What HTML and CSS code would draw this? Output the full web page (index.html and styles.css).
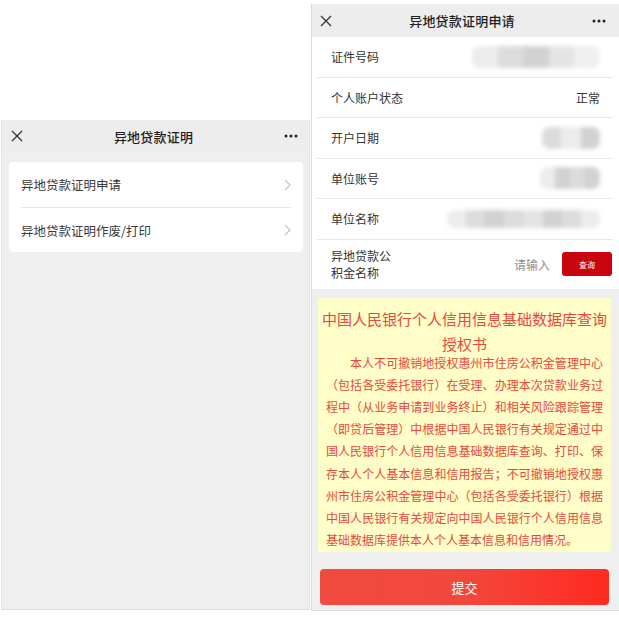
FILE: index.html
```html
<!DOCTYPE html>
<html lang="zh-CN">
<head>
<meta charset="utf-8">
<title>异地贷款证明</title>
<link rel="stylesheet" href="styles.css">
</head>
<body>
<div class="stage">
  <section class="phone phone-left">
    <header class="nav">
      <svg class="nav-close" width="12" height="12" viewBox="0 0 12 12"><path d="M1 1L11 11M11 1L1 11" stroke="#333" stroke-width="1.3" fill="none"/></svg>
      <div class="nav-title">异地贷款证明</div>
      <svg class="nav-more" width="14" height="4" viewBox="0 0 14 4"><circle cx="2" cy="2" r="1.5" fill="#222"/><circle cx="7" cy="2" r="1.5" fill="#222"/><circle cx="12" cy="2" r="1.5" fill="#222"/></svg>
    </header>
    <div class="menu-card">
      <div class="menu-row">
        <span>异地贷款证明申请</span>
        <svg class="chev" width="7" height="12" viewBox="0 0 7 12"><path d="M1 1L6 6L1 11" stroke="#c4c4c4" stroke-width="1.2" fill="none"/></svg>
      </div>
      <div class="menu-row">
        <span>异地贷款证明作废/打印</span>
        <svg class="chev" width="7" height="12" viewBox="0 0 7 12"><path d="M1 1L6 6L1 11" stroke="#c4c4c4" stroke-width="1.2" fill="none"/></svg>
      </div>
    </div>
  </section>

  <section class="phone phone-right">
    <header class="nav nav-right">
      <svg class="nav-close" width="12" height="12" viewBox="0 0 12 12"><path d="M1 1L11 11M11 1L1 11" stroke="#333" stroke-width="1.3" fill="none"/></svg>
      <div class="nav-title">异地贷款证明申请</div>
      <svg class="nav-more" width="14" height="4" viewBox="0 0 14 4"><circle cx="2" cy="2" r="1.5" fill="#222"/><circle cx="7" cy="2" r="1.5" fill="#222"/><circle cx="12" cy="2" r="1.5" fill="#222"/></svg>
    </header>
    <div class="form">
      <div class="form-row">
        <span class="label">证件号码</span>
        <div class="blur blur-id"><i class="b1"></i><i class="b2"></i><i class="b3"></i><i class="b4"></i><i class="b5"></i></div>
      </div>
      <div class="form-row">
        <span class="label">个人账户状态</span>
        <span class="value">正常</span>
      </div>
      <div class="form-row">
        <span class="label">开户日期</span>
        <div class="blur blur-date"><i class="b2"></i><i class="b1"></i><i class="b3"></i></div>
      </div>
      <div class="form-row">
        <span class="label">单位账号</span>
        <div class="blur blur-acct"><i class="b1"></i><i class="b3"></i><i class="b2"></i><i class="b3"></i></div>
      </div>
      <div class="form-row">
        <span class="label">单位名称</span>
        <div class="blur blur-name"><i class="b1"></i><i class="b2"></i><i class="b3"></i><i class="b2"></i><i class="b4"></i><i class="b3"></i><i class="b2"></i><i class="b1"></i></div>
      </div>
      <div class="form-row form-row-last">
        <span class="label label-wrap">异地贷款公<br>积金名称</span>
        <span class="placeholder">请输入</span>
        <button class="query-btn">查询</button>
      </div>
    </div>
    <div class="notice">
      <h2 class="notice-title">中国人民银行个人信用信息基础数据库查询授权书</h2>
      <p class="notice-body">本人不可撤销地授权惠州市住房公积金管理中心（包括各受委托银行）在受理、办理本次贷款业务过程中（从业务申请到业务终止）和相关风险跟踪管理（即贷后管理）中根据中国人民银行有关规定通过中国人民银行个人信用信息基础数据库查询、打印、保存本人个人基本信息和信用报告；不可撤销地授权惠州市住房公积金管理中心（包括各受委托银行）根据中国人民银行有关规定向中国人民银行个人信用信息基础数据库提供本人个人基本信息和信用情况。</p>
    </div>
    <button class="submit-btn">提交</button>
  </section>
</div>
</body>
</html>
```

FILE: styles.css
```css
* { box-sizing: border-box; }
html, body {
  margin: 0;
  padding: 0;
  background: #ffffff;
  font-family: "Noto Sans CJK SC", "Noto Sans", sans-serif;
  color: #333;
}
.stage {
  width: 619px;
  height: 622px;
  display: flex;
  align-items: flex-start;
  overflow: hidden;
}
.phone {
  background: #efefef;
  display: flex;
  flex-direction: column;
}
.phone-left {
  margin-top: 120px;
  margin-left: 1px;
  width: 309px;
  height: 490px;
  border-left: 1px solid #e2e2e2;
  border-right: 1px solid #e2e2e2;
  border-bottom: 1px solid #dcdcdc;
}
.phone-right {
  margin-top: 4px;
  margin-left: 1px;
  width: 308px;
  height: 607px;
  border-left: 1px solid #dadada;
  border-bottom: 1px solid #dcdcdc;
}
.nav {
  height: 32px;
  flex: none;
  display: flex;
  align-items: center;
  background: #ededed;
  padding: 0 11px 0 9px;
}
.nav-right {
  height: 33px;
  padding: 0 13px 0 8px;
}
.nav-close { flex: none; }
.nav-title {
  flex: 1;
  text-align: center;
  font-size: 13px;
  color: #1f1f1f;
  font-weight: 500;
  letter-spacing: 0.2px;
}
.nav-more { flex: none; }

.menu-card {
  margin: 10px 6px 0 7px;
  background: #fff;
  border-radius: 4px;
  padding: 0 12px;
}
.menu-row {
  height: 45px;
  display: flex;
  align-items: center;
  justify-content: space-between;
  font-size: 12.5px;
  color: #3a3a3a;
  padding-right: 0;
}
.menu-row + .menu-row { border-top: 1px solid #e6e6e6; }
.chev { flex: none; }

.form {
  background: #fff;
  padding: 0 6px 0 5px;
  flex: none;
}
.form-row {
  height: 40.5px;
  display: flex;
  align-items: center;
  border-bottom: 1px solid #e8e8e8;
  padding: 0 13px 0 14px;
  font-size: 12px;
}
.form-row-last {
  height: 49px;
  border-bottom: none;
  padding-right: 0;
}
.label { color: #333; flex: none; }
.label-wrap { line-height: 17px; }
.value { margin-left: auto; color: #333; }
.placeholder {
  margin-left: auto;
  color: #8f8f8f;
  margin-right: 12px;
}
.query-btn {
  width: 50px;
  height: 24px;
  border: none;
  border-radius: 3px;
  background: #c9060f;
  color: #fff;
  font-family: inherit;
  font-size: 8px;
  padding: 0;
  margin-right: 1px;
}

.blur {
  margin-left: auto;
  display: flex;
  filter: blur(2px);
  height: 20px;
  border-radius: 8px;
  overflow: hidden;
}
.blur i { display: block; height: 100%; flex: 1; }
.blur .b1 { background: #ececec; }
.blur .b2 { background: #dcdcdc; }
.blur .b3 { background: #d2d2d2; }
.blur .b4 { background: #e4e4e4; }
.blur .b5 { background: #f0f0f0; }
.blur-id { width: 128px; height: 22px; }
.blur-date { width: 58px; height: 22px; }
.blur-acct { width: 60px; height: 22px; }
.blur-name { width: 153px; height: 18px; }

.notice {
  margin: 9px 8px 0 6px;
  background: #fffdc8;
  padding: 8px 3px 1px;
  color: #e8493e;
}
.notice-title {
  margin: 0;
  font-size: 15px;
  font-weight: 400;
  line-height: 25px;
  text-align: center;
}
.notice-body {
  margin: -4px 5px 0;
  font-size: 12px;
  line-height: 22.2px;
  text-indent: 2em;
  text-align: justify;
}
.submit-btn {
  margin: 17px 10px 0 8px;
  height: 36px;
  border: none;
  border-radius: 4px;
  background: linear-gradient(90deg, #f14a3f 0%, #f3473c 50%, #ff2a20 100%);
  color: #fff;
  font-family: inherit;
  font-size: 13px;
  flex: none;
}
```
